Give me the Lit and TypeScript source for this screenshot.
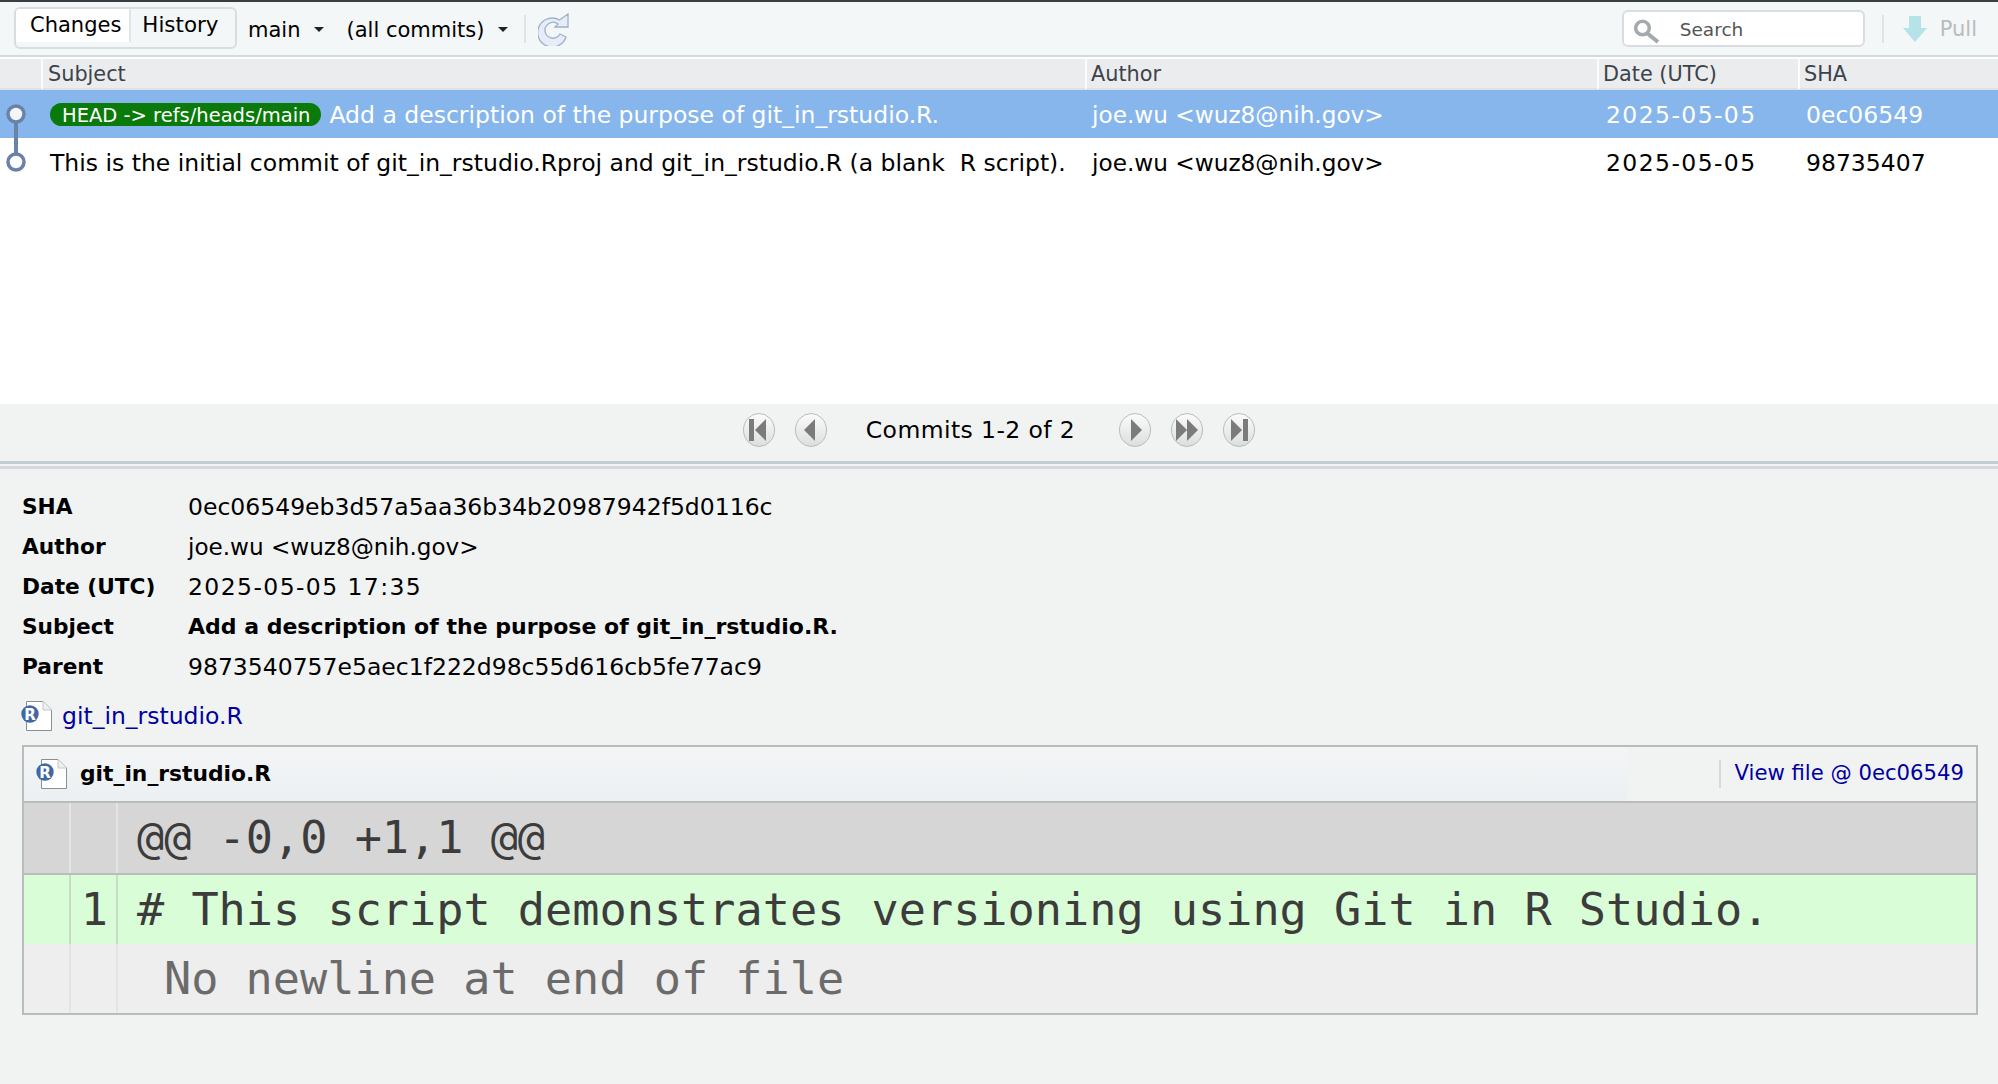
import { LitElement, html, css, svg } from "lit";
import { customElement } from "lit/decorators.js";

const rIcon = html`<svg class="ficon" width="32" height="32" viewBox="0 0 32 32">
  <path d="M5.500 1.500H22L30.500 10V30.500H5.500Z" fill="#fff" stroke="#8b8f92" stroke-width="1"/>
  <path d="M22 1.500V10H30.500" fill="#eef0f1" stroke="#c3c6c8" stroke-width="1"/>
  <circle cx="9" cy="14" r="8.700" fill="#4069a4"/>
  <text x="9" y="19.500" text-anchor="middle" class="r">R</text>
</svg>`;

const navBtn = (inner: unknown) => html`<svg class="nav" width="32" height="34" viewBox="0 0 32 34">
  <defs><linearGradient id="ng" x1="0" y1="0" x2="0" y2="1"><stop offset="0" stop-color="#fbfbfb"/><stop offset="1" stop-color="#dcdede"/></linearGradient></defs>
  <ellipse cx="16" cy="17" rx="15.500" ry="16.500" fill="url(#ng)" stroke="#b5bcc2"/>
  ${inner}
</svg>`;
const L = (x: number) => svg`<path d="M${x + 11} 6V28L${x} 17Z" fill="#7b7b7b"/>`;
const R = (x: number) => svg`<path d="M${x} 6V28L${x + 11} 17Z" fill="#7b7b7b"/>`;
const B = (x: number) => svg`<rect x="${x}" y="6" width="5" height="22" fill="#7b7b7b"/>`;

const node = (top: boolean, fill: string) => html`<svg width="42" height="48" viewBox="0 0 42 48">
  <path d="${top ? "M16 24V48" : "M16 0V24"}" stroke="#6b82a8" stroke-width="4"/>
  <circle cx="16" cy="24" r="8" fill="${fill}" stroke="#6b82a8" stroke-width="3.500"/>
</svg>`;

@customElement("app-root")
export class AppRoot extends LitElement {
  static styles = css`
    :host { display: block; width: 1998px; height: 1084px; overflow: hidden; background: #f1f3f3;
      font-family: "DejaVu Sans", sans-serif; font-size: 23px; color: #000; }
    .toolbar { height: 53px; border-top: 2px solid #3a3d3f; border-bottom: 2px solid #d4d9db; background: #f3f7f7;
      display: flex; align-items: center; padding: 0 21px 0 14px; box-sizing: content-box; }
    .tabs { display: flex; height: 38px; width: 219px; border: 2px solid #d9dddf; border-radius: 6px; margin-right: 11px; position: relative; top: -1px; flex: none; }
    .tab { padding: 0 10px 0 11px; font-size: 21.400px; line-height: 32px; height: 33px; }
    .tab.on { background: #fff; border-right: 2px solid #e2e5e6; padding-left: 14px; padding-right: 8px; border-radius: 4px 0 0 0; font-size: 21px; }
    .dd { display: flex; align-items: center; font-size: 21px; padding-top: 2px; }
    .dd.all { margin-left: 22px; }
    .caret { width: 0; height: 0; border: 5px solid transparent; border-top: 5px solid #222; border-bottom: 0; margin-left: 14px; }
    .sep { width: 2px; height: 28px; background: #e0e4e5; }
    .sep.s1 { margin: 0 12px 0 16px; }
    .sep.s2 { margin-left: 17px; }
    .spacer { flex: 1; }
    .search { width: 229px; height: 33px; background: #fff; border: 2px solid #d9dddf; border-radius: 6px; display: flex; align-items: center; gap: 20px; padding-left: 10px; color: #555; font-size: 18.500px; box-sizing: content-box; }
    .search span { padding-top: 2px; }
    .search svg { position: relative; top: 1px; }
    .arrow { margin-left: 19px; }
    .pull { color: #b9bcbd; font-size: 21px; margin-left: 13px; }
    .head { display: grid; grid-template-columns: 41px 1044px 512px 201px 1fr; background: #ebeced; border-bottom: 2px solid #dfe1e2; border-top: 2px solid #fff; box-sizing: border-box; height: 33px; color: #3d434a; font-size: 20.800px; }
    .head div { border-left: 2px solid #fbfbfb; padding-left: 4px; line-height: 30px; }
    .head div:first-child { border: 0; }
    .head div:nth-child(2) { padding-left: 5px; }
    .table { background: #fff; height: 314px; }
    .row { display: grid; grid-template-columns: 42px 1043px 512px 201px 1fr; height: 48px; align-items: center; font-size: 23.500px; }
    .row.sel { background: #87b6ec; color: #fff; }
    .row svg { display: block; }
    .row > div { padding: 1px 0 0 8px; white-space: pre; }
    .row > .g { padding: 0; height: 48px; }
    .subj { display: flex; align-items: center; gap: 8px; }
    .badge { background: #0a7a0a; color: #fff; border-radius: 12px; height: 23px; line-height: 25px; padding: 0 11px 0 12px; font-size: 19.500px; }
    .row > .auth { font-size: 23.200px; padding-left: 7px; }
    .date { letter-spacing: 1.400px; }
    .row > .date { padding-left: 9px; }
    .pager { height: 57px; display: flex; align-items: center; justify-content: center; font-size: 23.500px; padding-bottom: 6px; box-sizing: border-box; }
    .nav { margin: 0 10px; display: block; }
    .ptext { margin: 0 34px 0 29px; letter-spacing: 0.400px; }
    .split { height: 8px; border-top: 3px solid #c3ccd2; border-bottom: 3px solid #d3d9dc; background: #f1f3f3; box-sizing: border-box; }
    .meta { padding: 18px 0 0 22px; display: grid; grid-template-columns: 166px 1fr; grid-auto-rows: 40px; align-items: center; font-size: 23.500px; }
    .meta b { font-weight: 700; font-size: 21.700px; padding-bottom: 1px; }
    .meta b.sub { font-size: 22px; }
    .meta .auth { font-size: 23.100px; }
    .flink { display: flex; align-items: center; gap: 9px; height: 38px; margin: 10px 0 0 21px; color: #0000a0; font-size: 23.500px; }
    .flink svg, .dh svg { display: block; }
    .r { font: 700 15px "DejaVu Sans", sans-serif; fill: #fff; }
    .diff { margin: 10px 0 0 22px; width: 1956px; border: 2px solid #b9bcbc; box-sizing: border-box; height: 270px; }
    .dh { height: 54px; border-bottom: 2px solid #b9bcbc; display: flex; align-items: center; padding-left: 12px; gap: 12px; background: linear-gradient(#f3f5f6, #ecf0f2) no-repeat; background-size: 1603px 100%; box-sizing: content-box; }
    .dh b { font-size: 21.800px; flex: 1; padding-bottom: 2px; }
    .dh .vsep { width: 2px; height: 28px; background: #d7dadb; }
    .dh a { color: #0000a0; font-size: 21.200px; margin: 0 12px 0 1px; padding-bottom: 4px; }
    .dr { display: grid; grid-template-columns: 47px 47px 1fr; font: 45.200px/70px "DejaVu Sans Mono", monospace; color: #3c3c3c; white-space: pre; }
    .dr > div { height: 100%; box-sizing: border-box; border-right: 2px solid #e4e4e4; overflow: hidden; }
    .dr > div:last-child { border: 0; padding-left: 19px; }
    .hunk { background: #d6d6d6; height: 70px; border-bottom: 2px solid #b9bcbc; box-sizing: content-box; }
    .add { background: #d9fdd6; height: 69px; }
    .add > div { border-right-color: #c8dcc6; }
    .add .num { text-align: right; padding-right: 8px; }
    .nonl { background: #eeeeee; height: 69px; color: #6b6b6b; }
    .nonl > div:last-child { padding-left: 46px; }
  `;

  render() {
    return html`
      <div class="toolbar">
        <div class="tabs"><div class="tab on">Changes</div><div class="tab">History</div></div>
        <div class="dd">main<span class="caret"></span></div>
        <div class="dd all">(all commits)<span class="caret"></span></div>
        <div class="sep s1"></div>
        <svg width="32" height="34" viewBox="0 0 32 34"><path d="M21.500 8L30 2V15H17L20 12A8 8 0 1 0 22 22L28 25A14.500 14.500 0 1 1 21.500 8Z" fill="#e6edf9" stroke="#9fb1c8" stroke-width="1.300"/></svg>
        <div class="spacer"></div>
        <div class="search">
          <svg width="26" height="28" viewBox="0 0 26 28"><circle cx="8.500" cy="12" r="6.800" fill="none" stroke="#a3aaad" stroke-width="3.500"/><path d="M13.500 17.500L24 26" stroke="#a3aaad" stroke-width="4"/></svg>
          <span>Search</span>
        </div>
        <div class="sep s2"></div>
        <svg class="arrow" width="24" height="28" viewBox="0 0 24 28"><path d="M6 1H18V13H24L12 27L0 13H6Z" fill="#b5e3e8"/></svg>
        <span class="pull">Pull</span>
      </div>
      <div class="head"><div></div><div>Subject</div><div>Author</div><div>Date (UTC)</div><div>SHA</div></div>
      <div class="table">
        <div class="row sel">
          <div class="g">${node(true, "#f2f5f9")}</div>
          <div class="subj"><span class="badge">HEAD -&gt; refs/heads/main</span><span>Add a description of the purpose of git_in_rstudio.R.</span></div>
          <div class="auth">joe.wu &lt;wuz8@nih.gov&gt;</div><div class="date">2025-05-05</div><div>0ec06549</div>
        </div>
        <div class="row">
          <div class="g">${node(false, "#fff")}</div>
          <div>This is the initial commit of git_in_rstudio.Rproj and git_in_rstudio.R (a blank  R script).</div>
          <div class="auth">joe.wu &lt;wuz8@nih.gov&gt;</div><div class="date">2025-05-05</div><div>98735407</div>
        </div>
      </div>
      <div class="pager">
        ${navBtn(svg`${B(6)}${L(12)}`)}${navBtn(L(9))}
        <span class="ptext">Commits 1-2 of 2</span>
        ${navBtn(R(12))}${navBtn(svg`${R(5)}${R(16)}`)}${navBtn(svg`${R(8)}${B(20)}`)}
      </div>
      <div class="split"></div>
      <div class="meta">
        <b>SHA</b><span>0ec06549eb3d57a5aa36b34b20987942f5d0116c</span>
        <b>Author</b><span class="auth">joe.wu &lt;wuz8@nih.gov&gt;</span>
        <b>Date (UTC)</b><span class="date">2025-05-05 17:35</span>
        <b>Subject</b><b class="sub">Add a description of the purpose of git_in_rstudio.R.</b>
        <b>Parent</b><span>9873540757e5aec1f222d98c55d616cb5fe77ac9</span>
      </div>
      <div class="flink">${rIcon}<span>git_in_rstudio.R</span></div>
      <div class="diff">
        <div class="dh">${rIcon}<b>git_in_rstudio.R</b><span class="vsep"></span><a>View file @ 0ec06549</a></div>
        <div class="dr hunk"><div></div><div></div><div>@@ -0,0 +1,1 @@</div></div>
        <div class="dr add"><div></div><div class="num">1</div><div># This script demonstrates versioning using Git in R Studio.</div></div>
        <div class="dr nonl"><div></div><div></div><div>No newline at end of file</div></div>
      </div>
    `;
  }
}
